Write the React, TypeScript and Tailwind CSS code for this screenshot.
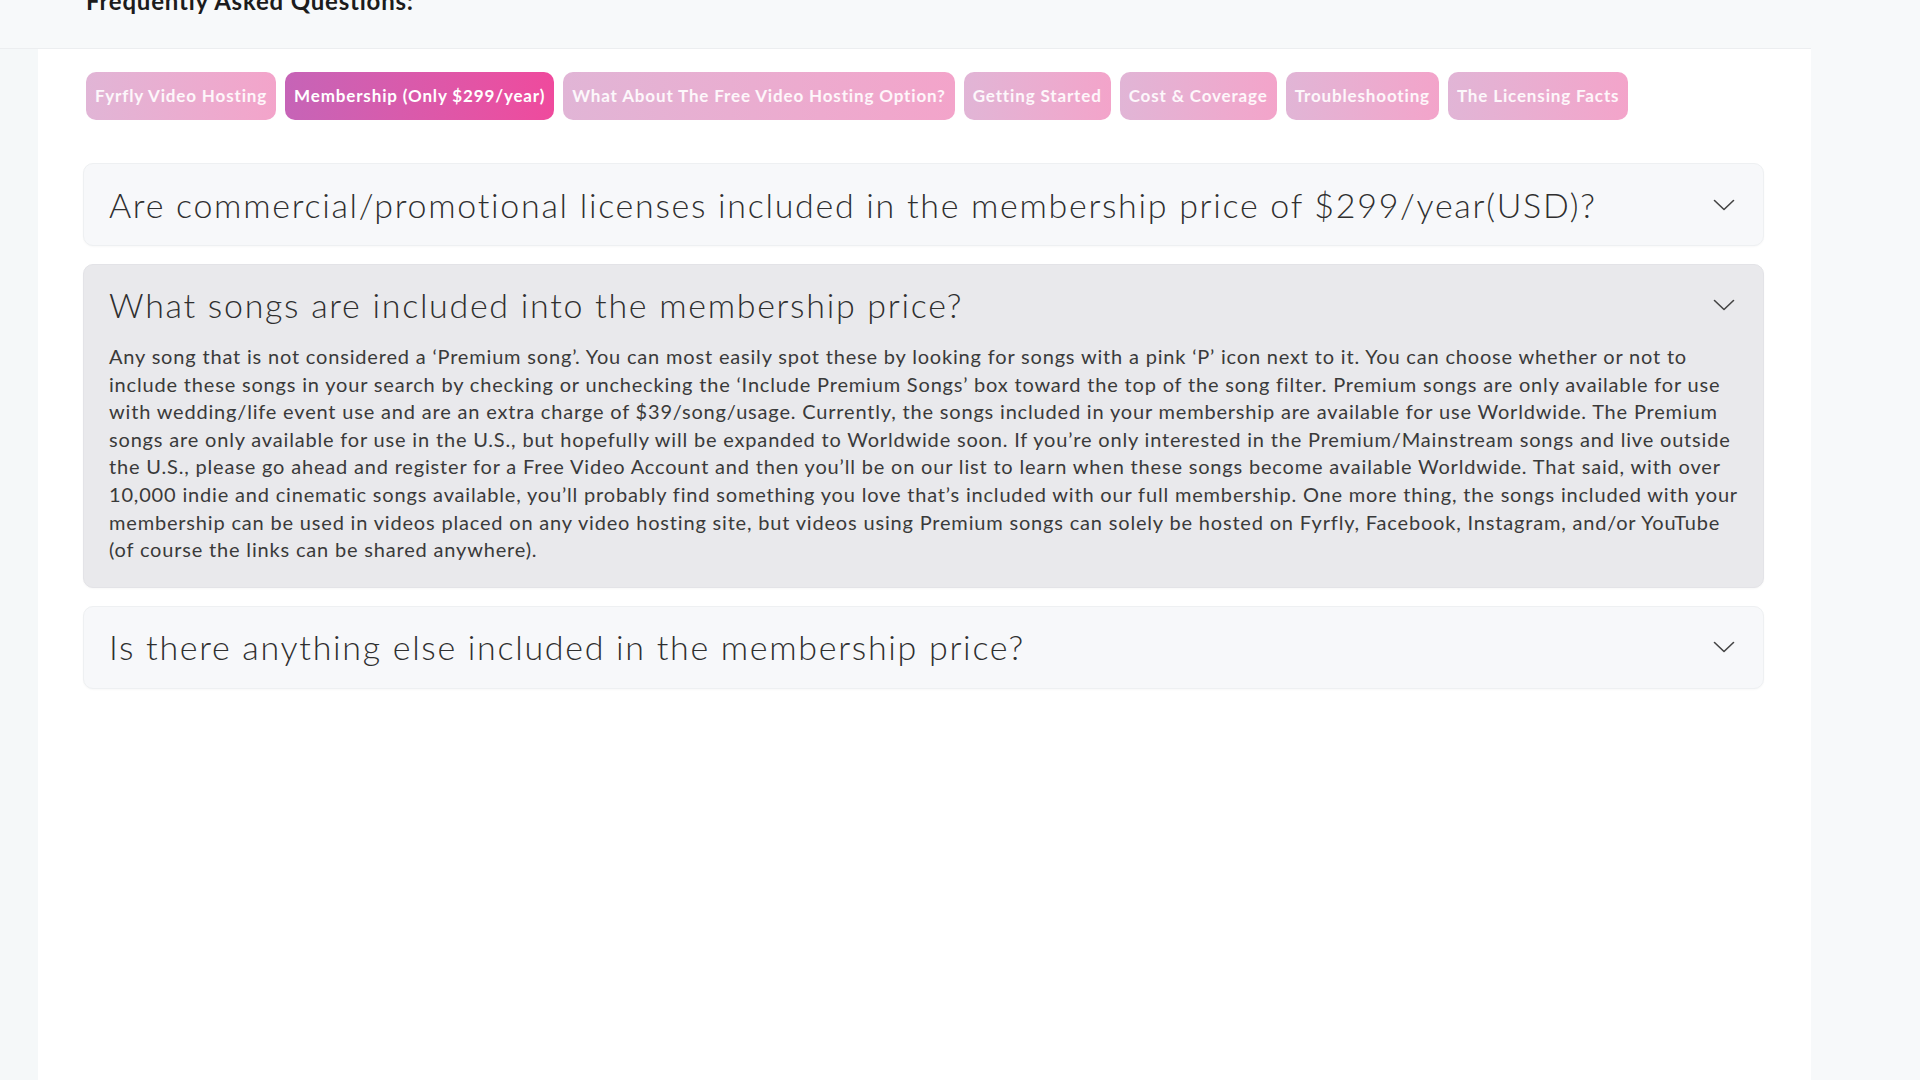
import * as React from "react";

const TABS = [
  { label: "Fyrfly Video Hosting", active: false },
  { label: "Membership (Only $299/year)", active: true },
  { label: "What About The Free Video Hosting Option?", active: false },
  { label: "Getting Started", active: false },
  { label: "Cost & Coverage", active: false },
  { label: "Troubleshooting", active: false },
  { label: "The Licensing Facts", active: false },
];

const ANSWER_LINES = [
  "Any song that is not considered a ‘Premium song’. You can most easily spot these by looking for songs with a pink ‘P’ icon next to it. You can choose whether or not to",
  "include these songs in your search by checking or unchecking the ‘Include Premium Songs’ box toward the top of the song filter. Premium songs are only available for use",
  "with wedding/life event use and are an extra charge of $39/song/usage. Currently, the songs included in your membership are available for use Worldwide. The Premium",
  "songs are only available for use in the U.S., but hopefully will be expanded to Worldwide soon. If you’re only interested in the Premium/Mainstream songs and live outside",
  "the U.S., please go ahead and register for a Free Video Account and then you’ll be on our list to learn when these songs become available Worldwide. That said, with over",
  "10,000 indie and cinematic songs available, you’ll probably find something you love that’s included with our full membership. One more thing, the songs included with your",
  "membership can be used in videos placed on any video hosting site, but videos using Premium songs can solely be hosted on Fyrfly, Facebook, Instagram, and/or YouTube",
  "(of course the links can be shared anywhere).",
];

const QUESTIONS = [
  { q: "Are commercial/promotional licenses included in the membership price of $299/year(USD)?", open: false },
  { q: "What songs are included into the membership price?", open: true },
  { q: "Is there anything else included in the membership price?", open: false },
];

function Chevron() {
  return (
    <svg width="22" height="12" viewBox="0 0 22 12" fill="none" aria-hidden>
      <polyline points="1.5,1.5 11,10.5 20.5,1.5" stroke="#444" strokeWidth="1.6" strokeLinecap="round" strokeLinejoin="round" />
    </svg>
  );
}

function FaqItem({ q, open }: { q: string; open: boolean }) {
  return (
    <div
      className={
        open
          ? "rounded-[10px] border border-[#e3e3e7] bg-[#e9e9ec] shadow-[0_1px_2px_rgba(0,0,0,0.03)]"
          : "rounded-[10px] border border-[#eef0f2] bg-[#f7f8fa] shadow-[0_1px_2px_rgba(0,0,0,0.03)]"
      }
    >
      <button
        type="button"
        className={
          open
            ? "flex w-full items-center justify-between py-[19px] pl-[25px] pr-[28px] text-left"
            : "flex w-full items-center justify-between py-[19.5px] pl-[25px] pr-[28px] text-left"
        }
      >
        <span className="whitespace-nowrap text-[34px] font-light leading-[42px] tracking-[1.7px] text-[#2f2f2f]">{q}</span>
        <Chevron />
      </button>
      {open && (
        <div className="-mt-[2px] pb-[23px] pl-[25px] pr-[20px] text-[20px] leading-[27.6px] tracking-[0.82px] text-[#3a3a3a]">
          {ANSWER_LINES.map((l, i) => (
            <span key={i} className="block whitespace-nowrap">
              {l}
            </span>
          ))}
        </div>
      )}
    </div>
  );
}

export default function App() {
  return (
    <div className="flex h-screen overflow-hidden bg-[#f7f9fa] font-['Lato','Liberation_Sans',sans-serif]">
      <div className="flex w-[1811px] flex-col">
        <div className="h-[49px] shrink-0 border-b border-[#eceef0] pl-[86px]">
          <h2 className="-mt-[11px] whitespace-nowrap text-[24px] font-bold leading-none tracking-[0.8px] text-[#1c1c1c]">
            Frequently Asked Questions:
          </h2>
        </div>
        <div className="flex flex-1">
          <div className="w-[38px] shrink-0 bg-[#f5f8f9]" />
          <div className="flex-1 bg-white pl-[45px] pr-[47px] pt-[23px]">
            <nav className="ml-[3px] flex gap-[9px]">
              {TABS.map((t) => (
                <button
                  key={t.label}
                  type="button"
                  className={
                    t.active
                      ? "h-[48px] whitespace-nowrap rounded-[10px] bg-gradient-to-r from-[#c664b7] to-[#ef4a9d] px-[9px] text-[17px] font-bold tracking-[0.85px] text-white"
                      : "h-[48px] whitespace-nowrap rounded-[10px] bg-gradient-to-r from-[#e1b5d6] to-[#f3a4ca] px-[9px] text-[17px] font-bold tracking-[0.85px] text-white/90"
                  }
                >
                  {t.label}
                </button>
              ))}
            </nav>
            <div className="mt-[43px] flex flex-col gap-[18px]">
              {QUESTIONS.map((item) => (
                <FaqItem key={item.q} q={item.q} open={item.open} />
              ))}
            </div>
          </div>
        </div>
      </div>
    </div>
  );
}
